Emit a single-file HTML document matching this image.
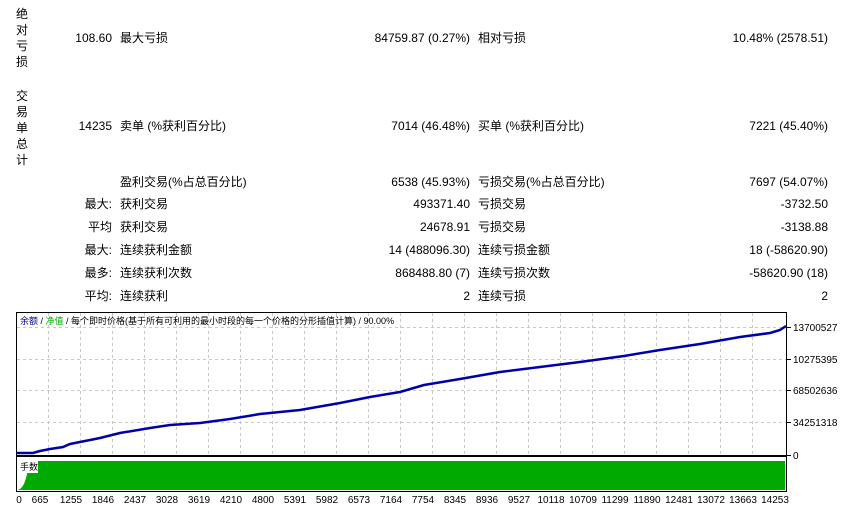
<!DOCTYPE html>
<html><head><meta charset="utf-8"><style>
body{margin:0;width:848px;height:509px;background:#fff;position:relative;overflow:hidden;font-family:"Liberation Sans","Noto Sans CJK SC",sans-serif;font-size:12px;color:#000}
.t{position:absolute;white-space:nowrap;line-height:14px}
.r{text-align:right}
.v{position:absolute;left:16px;width:14px;font-size:12px;line-height:16px}
</style></head><body>
<div class="v" style="top:6px">绝<br>对<br>亏<br>损</div>
<div class="v" style="top:88px">交<br>易<br>单<br>总<br>计</div>

<div class="t r" style="right:736px;top:31px">108.60</div><div class="t" style="left:120px;top:31px">最大亏损</div>
<div class="t r" style="right:378px;top:31px">84759.87 (0.27%)</div><div class="t" style="left:478px;top:31px">相对亏损</div>
<div class="t r" style="right:20px;top:31px">10.48% (2578.51)</div>

<div class="t r" style="right:736px;top:119px">14235</div><div class="t" style="left:120px;top:119px">卖单 (%获利百分比)</div>
<div class="t r" style="right:378px;top:119px">7014 (46.48%)</div><div class="t" style="left:478px;top:119px">买单 (%获利百分比)</div>
<div class="t r" style="right:20px;top:119px">7221 (45.40%)</div>

<div class="t" style="left:120px;top:175px">盈利交易(%占总百分比)</div>
<div class="t r" style="right:378px;top:175px">6538 (45.93%)</div><div class="t" style="left:478px;top:175px">亏损交易(%占总百分比)</div>
<div class="t r" style="right:20px;top:175px">7697 (54.07%)</div>

<div class="t r" style="right:736px;top:197px">最大:</div><div class="t" style="left:120px;top:197px">获利交易</div>
<div class="t r" style="right:378px;top:197px">493371.40</div><div class="t" style="left:478px;top:197px">亏损交易</div>
<div class="t r" style="right:20px;top:197px">-3732.50</div>

<div class="t r" style="right:736px;top:220px">平均</div><div class="t" style="left:120px;top:220px">获利交易</div>
<div class="t r" style="right:378px;top:220px">24678.91</div><div class="t" style="left:478px;top:220px">亏损交易</div>
<div class="t r" style="right:20px;top:220px">-3138.88</div>

<div class="t r" style="right:736px;top:243px">最大:</div><div class="t" style="left:120px;top:243px">连续获利金额</div>
<div class="t r" style="right:378px;top:243px">14 (488096.30)</div><div class="t" style="left:478px;top:243px">连续亏损金额</div>
<div class="t r" style="right:20px;top:243px">18 (-58620.90)</div>

<div class="t r" style="right:736px;top:266px">最多:</div><div class="t" style="left:120px;top:266px">连续获利次数</div>
<div class="t r" style="right:378px;top:266px">868488.80 (7)</div><div class="t" style="left:478px;top:266px">连续亏损次数</div>
<div class="t r" style="right:20px;top:266px">-58620.90 (18)</div>

<div class="t r" style="right:736px;top:289px">平均:</div><div class="t" style="left:120px;top:289px">连续获利</div>
<div class="t r" style="right:378px;top:289px">2</div><div class="t" style="left:478px;top:289px">连续亏损</div>
<div class="t r" style="right:20px;top:289px">2</div>

<svg style="position:absolute;left:0;top:0" width="848" height="509">
<g stroke="#c8c8c8" stroke-dasharray="3,3" stroke-width="1">
<line x1="17" y1="327.5" x2="786" y2="327.5"/><line x1="17" y1="359.5" x2="786" y2="359.5"/><line x1="17" y1="390.5" x2="786" y2="390.5"/><line x1="17" y1="422.5" x2="786" y2="422.5"/>
</g>
<g stroke="#c8c8c8" stroke-dasharray="3,3">
<line x1="48.5" y1="313" x2="48.5" y2="455"/><line x1="80.5" y1="313" x2="80.5" y2="455"/><line x1="112.5" y1="313" x2="112.5" y2="455"/><line x1="144.5" y1="313" x2="144.5" y2="455"/><line x1="176.5" y1="313" x2="176.5" y2="455"/><line x1="208.5" y1="313" x2="208.5" y2="455"/><line x1="240.5" y1="313" x2="240.5" y2="455"/><line x1="272.5" y1="313" x2="272.5" y2="455"/><line x1="304.5" y1="313" x2="304.5" y2="455"/><line x1="336.5" y1="313" x2="336.5" y2="455"/><line x1="368.5" y1="313" x2="368.5" y2="455"/><line x1="400.5" y1="313" x2="400.5" y2="455"/><line x1="432.5" y1="313" x2="432.5" y2="455"/><line x1="464.5" y1="313" x2="464.5" y2="455"/><line x1="496.5" y1="313" x2="496.5" y2="455"/><line x1="528.5" y1="313" x2="528.5" y2="455"/><line x1="560.5" y1="313" x2="560.5" y2="455"/><line x1="592.5" y1="313" x2="592.5" y2="455"/><line x1="624.5" y1="313" x2="624.5" y2="455"/><line x1="656.5" y1="313" x2="656.5" y2="455"/><line x1="688.5" y1="313" x2="688.5" y2="455"/><line x1="720.5" y1="313" x2="720.5" y2="455"/><line x1="752.5" y1="313" x2="752.5" y2="455"/>
</g>
<rect x="16.5" y="312.5" width="770" height="143" fill="none" stroke="#000"/>
<rect x="16.5" y="456.5" width="770" height="35" fill="none" stroke="#000"/>
<polygon points="18,490 20,489 22,487 24,484 26,478 28,470 30,461 785,461 785,490" fill="#00aa00"/>
<rect x="18" y="460" width="20" height="13" fill="#fff"/>
<polyline fill="none" stroke="#0000a8" stroke-width="2.5" points="17,453 33,453 40,451 50,449 63,447 70,444 85,441 100,438 120,433 150,428 170,425 200,423 230,419 260,414 300,410 340,403 370,397 400,392 424,385 460,379 500,372 540,367 580,362 624,356 660,350 700,344 740,337 770,333 780,330 786,326"/>
<g stroke="#000"><line x1="787" y1="327.5" x2="791" y2="327.5"/><line x1="787" y1="359.5" x2="791" y2="359.5"/><line x1="787" y1="390.5" x2="791" y2="390.5"/><line x1="787" y1="422.5" x2="791" y2="422.5"/><line x1="787" y1="455.5" x2="791" y2="455.5"/></g>
<g font-family="Liberation Sans, sans-serif" font-size="10" fill="#000">
<text x="793" y="331">13700527</text><text x="793" y="363">10275395</text><text x="793" y="394">68502636</text><text x="793" y="426">34251318</text><text x="793" y="459">0</text>
</g>
<g font-family="Liberation Sans, sans-serif" font-size="10" fill="#000" text-anchor="middle">
<text x="19" y="503">0</text><text x="40" y="503">665</text><text x="71" y="503">1255</text><text x="103" y="503">1846</text><text x="135" y="503">2437</text><text x="167" y="503">3028</text><text x="199" y="503">3619</text><text x="231" y="503">4210</text><text x="263" y="503">4800</text><text x="295" y="503">5391</text><text x="327" y="503">5982</text><text x="359" y="503">6573</text><text x="391" y="503">7164</text><text x="423" y="503">7754</text><text x="455" y="503">8345</text><text x="487" y="503">8936</text><text x="519" y="503">9527</text><text x="551" y="503">10118</text><text x="583" y="503">10709</text><text x="615" y="503">11299</text><text x="647" y="503">11890</text><text x="679" y="503">12481</text><text x="711" y="503">13072</text><text x="743" y="503">13663</text><text x="775" y="503">14253</text>
</g>
<text x="20" y="324" font-family="Liberation Sans, Noto Sans CJK SC, sans-serif" font-size="9"><tspan fill="#00008b">余额</tspan><tspan fill="#000"> / </tspan><tspan fill="#00b000">净值</tspan><tspan fill="#000"> / 每个即时价格(基于所有可利用的最小时段的每一个价格的分形插值计算) / 90.00%</tspan></text>
<text x="20" y="470" font-family="Liberation Sans, Noto Sans CJK SC, sans-serif" font-size="9">手数</text>
</svg>
</body></html>
